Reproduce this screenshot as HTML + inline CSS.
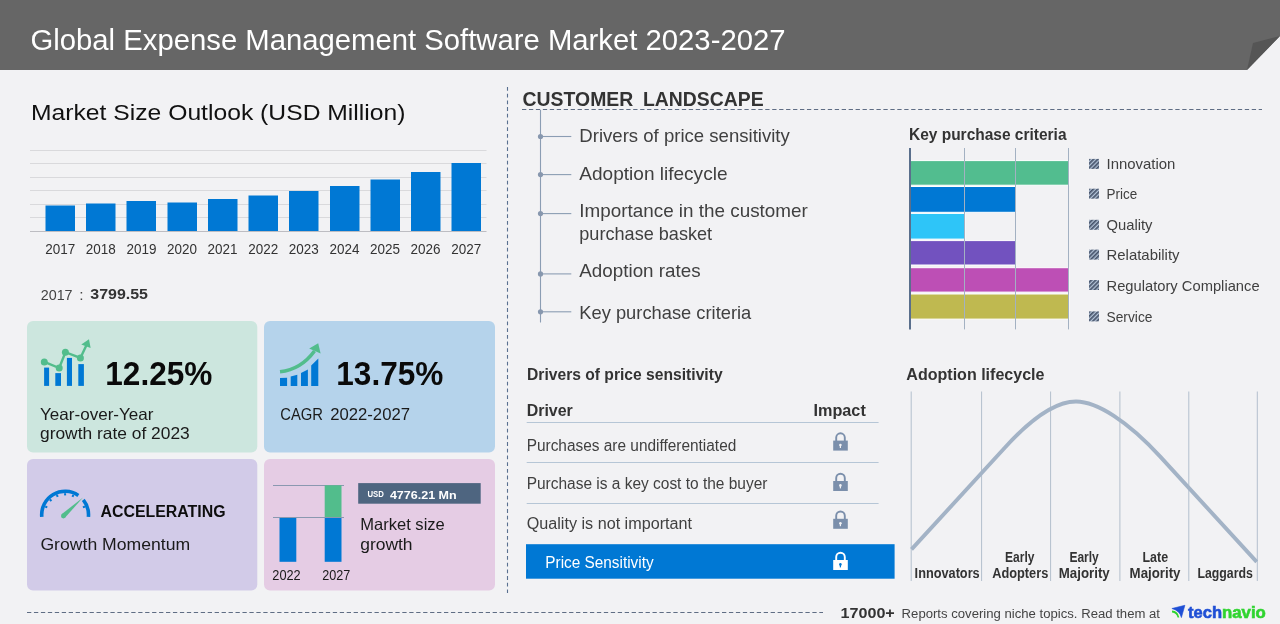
<!DOCTYPE html>
<html><head><meta charset="utf-8">
<style>
html,body{margin:0;padding:0;background:#f2f2f4;}
body{width:1280px;height:624px;overflow:hidden;}
svg{display:block;will-change:transform;}
text{font-family:"Liberation Sans",sans-serif;}
.b{font-weight:bold;}
</style></head>
<body>
<svg width="1280" height="624" viewBox="0 0 1280 624">
<rect x="0" y="0" width="1280" height="624" fill="#f2f2f4"/>
<!-- header -->
<polygon points="0,0 1280,0 1280,36 1247,70 0,70" fill="#666666"/>
<polygon points="1247,70 1253,43 1280,36" fill="#555555"/>
<text x="30.5" y="50" font-size="29" fill="#ffffff" textLength="755" lengthAdjust="spacingAndGlyphs">Global Expense Management Software Market 2023-2027</text>

<!-- Market size outlook -->
<text x="31" y="119.7" font-size="22.5" fill="#111111" textLength="374.5" lengthAdjust="spacingAndGlyphs">Market Size Outlook (USD Million)</text>
<g stroke="#d9d9dc" stroke-width="1">
<line x1="30" y1="150.5" x2="486.5" y2="150.5"/>
<line x1="30" y1="163.5" x2="486.5" y2="163.5"/>
<line x1="30" y1="177.5" x2="486.5" y2="177.5"/>
<line x1="30" y1="190.5" x2="486.5" y2="190.5"/>
<line x1="30" y1="204.5" x2="486.5" y2="204.5"/>
<line x1="30" y1="217.5" x2="486.5" y2="217.5"/>
</g>
<g fill="#0078d4">
<rect x="45.5" y="205.5" width="29.5" height="26"/>
<rect x="86" y="203.5" width="29.5" height="28"/>
<rect x="126.5" y="201" width="29.5" height="30.5"/>
<rect x="167.5" y="202.5" width="29.5" height="29"/>
<rect x="208" y="199" width="29.5" height="32.5"/>
<rect x="248.5" y="195.5" width="29.5" height="36"/>
<rect x="289" y="191" width="29.5" height="40.5"/>
<rect x="330" y="186" width="29.5" height="45.5"/>
<rect x="370.5" y="179.5" width="29.5" height="52"/>
<rect x="411" y="172" width="29.5" height="59.5"/>
<rect x="451.5" y="163" width="29.5" height="68.5"/>
</g>
<line x1="30" y1="231.5" x2="486.5" y2="231.5" stroke="#bdbdc2" stroke-width="1"/>
<g font-size="14.5" fill="#333333" text-anchor="middle">
<text x="60.2" y="254" textLength="30" lengthAdjust="spacingAndGlyphs">2017</text>
<text x="100.8" y="254" textLength="30" lengthAdjust="spacingAndGlyphs">2018</text>
<text x="141.4" y="254" textLength="30" lengthAdjust="spacingAndGlyphs">2019</text>
<text x="182" y="254" textLength="30" lengthAdjust="spacingAndGlyphs">2020</text>
<text x="222.6" y="254" textLength="30" lengthAdjust="spacingAndGlyphs">2021</text>
<text x="263.2" y="254" textLength="30" lengthAdjust="spacingAndGlyphs">2022</text>
<text x="303.8" y="254" textLength="30" lengthAdjust="spacingAndGlyphs">2023</text>
<text x="344.4" y="254" textLength="30" lengthAdjust="spacingAndGlyphs">2024</text>
<text x="385" y="254" textLength="30" lengthAdjust="spacingAndGlyphs">2025</text>
<text x="425.6" y="254" textLength="30" lengthAdjust="spacingAndGlyphs">2026</text>
<text x="466.2" y="254" textLength="30" lengthAdjust="spacingAndGlyphs">2027</text>
</g>
<text x="40.7" y="299.8" font-size="15.5" fill="#444444" textLength="31.9" lengthAdjust="spacingAndGlyphs">2017</text><text x="79.2" y="299.8" font-size="15.5" fill="#444444">:</text>
<text x="90.3" y="299.4" font-size="15" class="b" fill="#333333" textLength="57.7" lengthAdjust="spacingAndGlyphs">3799.55</text>

<!-- cards -->
<rect x="27" y="321" width="230.3" height="131.5" rx="6" fill="#cce6de"/>
<rect x="264" y="321" width="231" height="131.5" rx="6" fill="#b5d3eb"/>
<rect x="27" y="459" width="230.3" height="131.5" rx="6" fill="#d2cbe8"/>
<rect x="264" y="459" width="231" height="131.5" rx="6" fill="#e5cce4"/>

<!-- card1 icon -->
<g fill="#0078d4">
<rect x="44.1" y="367.6" width="5" height="18.3"/>
<rect x="55.3" y="373.1" width="5.7" height="12.8"/>
<rect x="66.9" y="357.9" width="5.1" height="28"/>
<rect x="78.3" y="364.1" width="5.6" height="21.8"/>
</g>
<g fill="#52bd8c" stroke="#52bd8c">
<polyline points="44.3,361.9 59.2,368 65.4,352.2 80.4,357.9 86.3,345.5" fill="none" stroke-width="2.4"/>
<circle cx="44.3" cy="361.9" r="3.5" stroke="none"/>
<circle cx="59.2" cy="368" r="3.5" stroke="none"/>
<circle cx="65.4" cy="352.2" r="3.5" stroke="none"/>
<circle cx="80.4" cy="357.9" r="3.5" stroke="none"/>
<polygon points="89,339.3 81.3,344.6 90.6,348" stroke="none"/>
</g>
<text x="105.3" y="385" font-size="33.8" class="b" fill="#0a0a0a" textLength="107" lengthAdjust="spacingAndGlyphs">12.25%</text>
<text x="40" y="419.8" font-size="16.5" fill="#1a1a1a" textLength="113.5" lengthAdjust="spacingAndGlyphs">Year-over-Year</text>
<text x="40" y="439.2" font-size="16.5" fill="#1a1a1a" textLength="149.8" lengthAdjust="spacingAndGlyphs">growth rate of 2023</text>

<!-- card2 icon -->
<g fill="#0078d4">
<polygon points="280,378 287.1,377.8 287.1,385.9 280,385.9"/>
<polygon points="290.7,376.5 297.3,374.7 297.3,385.9 290.7,385.9"/>
<polygon points="301,373 307.9,369.5 307.9,385.9 301,385.9"/>
<polygon points="311.2,365.5 318.3,358.4 318.3,385.9 311.2,385.9"/>
</g>
<path d="M280,371.8 Q301,369.5 314.5,351" fill="none" stroke="#52bd8c" stroke-width="3.6"/>
<polygon points="318.2,343.3 309.2,348.6 320.6,353.6" fill="#52bd8c"/>
<text x="336.3" y="385" font-size="33.8" class="b" fill="#0a0a0a" textLength="107" lengthAdjust="spacingAndGlyphs">13.75%</text>
<text x="280.2" y="420" font-size="16.5" fill="#1a1a1a" textLength="42.8" lengthAdjust="spacingAndGlyphs">CAGR</text><text x="330.2" y="420" font-size="16.5" fill="#1a1a1a" textLength="79.8" lengthAdjust="spacingAndGlyphs">2022-2027</text>

<!-- card3 gauge -->
<g fill="none" stroke="#0078d4" stroke-width="3.6">
<path d="M41.80,516.90 A23.4,23.4 0 0 1 78.35,495.42"/>
<path d="M83.29,499.97 A23.4,23.4 0 0 1 88.40,516.90"/>
</g>
<g stroke="#0078d4" stroke-width="2"><line x1="84.96" y1="506.47" x2="82.93" y2="507.31"/><line x1="73.33" y1="494.84" x2="72.49" y2="496.87"/><line x1="65.10" y1="493.20" x2="65.10" y2="495.40"/><line x1="56.87" y1="494.84" x2="57.71" y2="496.87"/><line x1="49.90" y1="499.50" x2="51.45" y2="501.05"/><line x1="45.24" y1="506.47" x2="47.27" y2="507.31"/></g>
<polygon points="61.6,514.3 65.2,517.6 83,497.4" fill="#52bd8c"/>
<circle cx="63.4" cy="516" r="2.4" fill="#52bd8c"/>
<text x="100.5" y="516.8" font-size="16" class="b" fill="#0d0d0d" textLength="125" lengthAdjust="spacingAndGlyphs">ACCELERATING</text>
<text x="40.4" y="549.8" font-size="16.5" fill="#1a1a1a" textLength="149.8" lengthAdjust="spacingAndGlyphs">Growth Momentum</text>

<!-- card4 mini chart -->
<line x1="273" y1="485.5" x2="344" y2="485.5" stroke="#8a98b0" stroke-width="1"/>
<rect x="324.7" y="485.3" width="16.8" height="32" fill="#52bd8c"/>
<rect x="279.5" y="517.8" width="16.8" height="44" fill="#0078d4"/>
<rect x="324.7" y="517.8" width="16.8" height="44" fill="#0078d4"/>
<line x1="273" y1="517.5" x2="344" y2="517.5" stroke="#8a98b0" stroke-width="1"/>
<text x="272.3" y="580" font-size="14.8" fill="#1a1a1a" textLength="28.4" lengthAdjust="spacingAndGlyphs">2022</text>
<text x="322.3" y="580" font-size="14.8" fill="#1a1a1a" textLength="28.1" lengthAdjust="spacingAndGlyphs">2027</text>
<rect x="358.2" y="483.1" width="122.5" height="20.6" fill="#4e6580"/>
<text x="367.5" y="496.8" font-size="9.5" class="b" fill="#ffffff" textLength="16.4" lengthAdjust="spacingAndGlyphs">USD</text>
<text x="389.9" y="498.8" font-size="11" class="b" fill="#ffffff" textLength="66.8" lengthAdjust="spacingAndGlyphs">4776.21 Mn</text>
<text x="360.2" y="529.7" font-size="16.5" fill="#1a1a1a" textLength="84.6" lengthAdjust="spacingAndGlyphs">Market size</text>
<text x="360.2" y="549.8" font-size="16.5" fill="#1a1a1a" textLength="52.4" lengthAdjust="spacingAndGlyphs">growth</text>

<!-- divider -->
<line x1="507.5" y1="87" x2="507.5" y2="593" stroke="#5a7090" stroke-width="1.1" stroke-dasharray="3.8,2.9"/>
<line x1="27" y1="612.5" x2="823" y2="612.5" stroke="#5f6d84" stroke-width="1.1" stroke-dasharray="4.3,2.65"/>

<!-- customer landscape -->
<text x="522.6" y="105.6" font-size="19.5" class="b" fill="#333333" textLength="110.7" lengthAdjust="spacingAndGlyphs">CUSTOMER</text><text x="643" y="105.6" font-size="19.5" class="b" fill="#333333" textLength="120.6" lengthAdjust="spacingAndGlyphs">LANDSCAPE</text>
<line x1="522" y1="109.5" x2="1262" y2="109.5" stroke="#5f6d84" stroke-width="1.1" stroke-dasharray="4.3,2.65"/>
<g stroke="#8b9db3" stroke-width="1.1" fill="#8797ae">
<line x1="540.5" y1="110" x2="540.5" y2="322.5"/>
<line x1="540.5" y1="136.5" x2="571.3" y2="136.5"/>
<line x1="540.5" y1="174.6" x2="571.3" y2="174.6"/>
<line x1="540.5" y1="213.6" x2="571.3" y2="213.6"/>
<line x1="540.5" y1="273.9" x2="571.3" y2="273.9"/>
<line x1="540.5" y1="311.8" x2="571.3" y2="311.8"/>
<circle cx="540.5" cy="136.5" r="2.6" stroke="none"/>
<circle cx="540.5" cy="174.6" r="2.6" stroke="none"/>
<circle cx="540.5" cy="213.6" r="2.6" stroke="none"/>
<circle cx="540.5" cy="273.9" r="2.6" stroke="none"/>
<circle cx="540.5" cy="311.8" r="2.6" stroke="none"/>
</g>
<g font-size="19" fill="#404040">
<text x="579.3" y="142.3" textLength="210.5" lengthAdjust="spacingAndGlyphs">Drivers of price sensitivity</text>
<text x="579.3" y="179.5" textLength="148.2" lengthAdjust="spacingAndGlyphs">Adoption lifecycle</text>
<text x="579.3" y="217.2" textLength="228.5" lengthAdjust="spacingAndGlyphs">Importance in the customer</text>
<text x="579.3" y="239.7" textLength="132.8" lengthAdjust="spacingAndGlyphs">purchase basket</text>
<text x="579.3" y="277.4" textLength="121.3" lengthAdjust="spacingAndGlyphs">Adoption rates</text>
<text x="579.3" y="318.5" textLength="172" lengthAdjust="spacingAndGlyphs">Key purchase criteria</text>
</g>

<!-- drivers table -->
<text x="527" y="379.6" font-size="15.9" class="b" fill="#333333" textLength="195.6" lengthAdjust="spacingAndGlyphs">Drivers of price sensitivity</text>
<text x="526.7" y="416" font-size="16.2" class="b" fill="#333333" textLength="46.1" lengthAdjust="spacingAndGlyphs">Driver</text>
<text x="813.5" y="416" font-size="16.2" class="b" fill="#333333" textLength="52.3" lengthAdjust="spacingAndGlyphs">Impact</text>
<g stroke="#b6c6d6" stroke-width="1">
<line x1="526.7" y1="422.5" x2="878.6" y2="422.5"/>
<line x1="526.7" y1="462.5" x2="878.6" y2="462.5"/>
<line x1="526.7" y1="503.5" x2="878.6" y2="503.5"/>
</g>
<g font-size="16" fill="#404040">
<text x="526.7" y="450.9" textLength="209.6" lengthAdjust="spacingAndGlyphs">Purchases are undifferentiated</text>
<text x="526.7" y="488.7" textLength="240.7" lengthAdjust="spacingAndGlyphs">Purchase is a key cost to the buyer</text>
<text x="526.7" y="528.5" textLength="165.3" lengthAdjust="spacingAndGlyphs">Quality is not important</text>
</g>
<rect x="526" y="544.2" width="368.6" height="34.5" fill="#0078d4"/>
<text x="545.3" y="567.9" font-size="16" fill="#ffffff" textLength="108.3" lengthAdjust="spacingAndGlyphs">Price Sensitivity</text>
<defs>
<g id="lock">
<path d="M-4.3,-8.2 L-4.3,-12 A4.3,4.3 0 0 1 4.3,-12 L4.3,-8.2" fill="none" stroke-width="1.9"/>
<rect x="-7.3" y="-9" width="14.6" height="10" stroke="none"/>
</g>
</defs>
<g fill="#7b8fab" stroke="#7b8fab">
<use href="#lock" x="840.5" y="449.6"/>
<use href="#lock" x="840.5" y="490"/>
<use href="#lock" x="840.5" y="527.8"/>
</g>
<g fill="#f2f2f4">
<circle cx="840.4" cy="445" r="1.3"/><rect x="839.8" y="445" width="1.2" height="3"/>
<circle cx="840.4" cy="485.4" r="1.3"/><rect x="839.8" y="485.4" width="1.2" height="3"/>
<circle cx="840.4" cy="523.2" r="1.3"/><rect x="839.8" y="523.2" width="1.2" height="3"/>
</g>
<g fill="#ffffff" stroke="#ffffff"><use href="#lock" x="840.5" y="569"/></g>
<g fill="#0078d4"><circle cx="840.4" cy="564.4" r="1.3"/><rect x="839.8" y="564.4" width="1.2" height="3"/></g>

<!-- key purchase criteria -->
<text x="909" y="139.5" font-size="16" class="b" fill="#333333" textLength="157.5" lengthAdjust="spacingAndGlyphs">Key purchase criteria</text>
<g stroke="#ffffff" stroke-width="1">
<rect x="909.5" y="160.6" width="159.8" height="24.6" fill="#52bd8f"/>
<rect x="909.5" y="186.5" width="106.7" height="25.8" fill="#0078d4"/>
<rect x="909.5" y="213.4" width="55.8" height="25.7" fill="#2ec5f8"/>
<rect x="909.5" y="240.6" width="106.7" height="24.4" fill="#7252bf"/>
<rect x="909.5" y="267.7" width="159.8" height="24.4" fill="#bd4fb5"/>
<rect x="909.5" y="294.0" width="159.8" height="25.1" fill="#bfb950"/>
</g>
<g stroke="#a3b1c2" stroke-width="1">
<line x1="964.5" y1="148" x2="964.5" y2="329.4"/>
<line x1="1015.5" y1="148" x2="1015.5" y2="329.4"/>
<line x1="1068.5" y1="148" x2="1068.5" y2="329.4"/>
</g>
<line x1="910" y1="148" x2="910" y2="329.4" stroke="#5a6f8c" stroke-width="2"/>
<defs>
<pattern id="hatch" patternUnits="userSpaceOnUse" width="3" height="3" patternTransform="rotate(45)">
<rect width="3" height="3" fill="#b4c4d8"/>
<rect width="1.7" height="3" fill="#46536a"/>
</pattern>
</defs>
<g fill="url(#hatch)">
<rect x="1089" y="158.9" width="10" height="10"/>
<rect x="1089" y="188.7" width="10" height="10"/>
<rect x="1089" y="219.8" width="10" height="10"/>
<rect x="1089" y="249.6" width="10" height="10"/>
<rect x="1089" y="280" width="10" height="10"/>
<rect x="1089" y="311.4" width="10" height="10"/>
</g>
<g font-size="15" fill="#404040">
<text x="1106.5" y="169.4" textLength="68.8" lengthAdjust="spacingAndGlyphs">Innovation</text>
<text x="1106.5" y="199.2" textLength="30.7" lengthAdjust="spacingAndGlyphs">Price</text>
<text x="1106.5" y="230.3" textLength="46" lengthAdjust="spacingAndGlyphs">Quality</text>
<text x="1106.5" y="260.1" textLength="73" lengthAdjust="spacingAndGlyphs">Relatability</text>
<text x="1106.5" y="290.5" textLength="153.1" lengthAdjust="spacingAndGlyphs">Regulatory Compliance</text>
<text x="1106.5" y="321.9" textLength="46" lengthAdjust="spacingAndGlyphs">Service</text>
</g>

<!-- adoption lifecycle -->
<text x="906.3" y="380.2" font-size="16" class="b" fill="#333333" textLength="138.2" lengthAdjust="spacingAndGlyphs">Adoption lifecycle</text>
<g stroke="#b3bfcd" stroke-width="1">
<line x1="911.2" y1="391.5" x2="911.2" y2="581"/>
<line x1="981.6" y1="391.5" x2="981.6" y2="581"/>
<line x1="1050.6" y1="391.5" x2="1050.6" y2="581"/>
<line x1="1119.9" y1="391.5" x2="1119.9" y2="581"/>
<line x1="1188.8" y1="391.5" x2="1188.8" y2="581"/>
<line x1="1257.3" y1="391.5" x2="1257.3" y2="581"/>
</g>
<path d="M911.5,549.4 L1005,447.5 C1030,420 1055,401.5 1076,401.5 C1097,401.5 1128,421.5 1160,456.4 L1256.7,561.9" fill="none" stroke="#a3b3c6" stroke-width="3.9"/>
<g font-size="14" class="b" fill="#333333">
<text x="914.6" y="578" textLength="65.1" lengthAdjust="spacingAndGlyphs">Innovators</text>
<text x="1005" y="562.2" textLength="29.4" lengthAdjust="spacingAndGlyphs">Early</text>
<text x="992.2" y="578" textLength="56.1" lengthAdjust="spacingAndGlyphs">Adopters</text>
<text x="1069.4" y="562.2" textLength="29.4" lengthAdjust="spacingAndGlyphs">Early</text>
<text x="1058.8" y="578" textLength="50.9" lengthAdjust="spacingAndGlyphs">Majority</text>
<text x="1142.5" y="562.2" textLength="25.6" lengthAdjust="spacingAndGlyphs">Late</text>
<text x="1129.6" y="578" textLength="50.9" lengthAdjust="spacingAndGlyphs">Majority</text>
<text x="1197.4" y="578" textLength="55.4" lengthAdjust="spacingAndGlyphs">Laggards</text>
</g>

<!-- footer -->
<text x="840.5" y="617.7" font-size="13.8" class="b" fill="#333333" textLength="54.3" lengthAdjust="spacingAndGlyphs">17000+</text>
<text x="901.6" y="617.7" font-size="12.5" fill="#444444" textLength="258.4" lengthAdjust="spacingAndGlyphs">Reports covering niche topics. Read them at</text>
<path d="M1171.9,608.5 L1184.9,605.3 L1181.4,617.6 Q1180,610.8 1171.9,608.5 Z" fill="#1f4fd5" stroke="#1f4fd5" stroke-width="0.6" stroke-linejoin="round"/>
<path d="M1172,610.6 Q1178.2,611 1179.3,617.4 L1177.6,617.6 Q1176.5,613 1172,612.6 Z" fill="#2fd42f"/>
<text x="1188" y="617.5" font-size="17" class="b" fill="#1f4fd5" stroke="#1f4fd5" stroke-width="0.6" textLength="34" lengthAdjust="spacingAndGlyphs">tech</text>
<text x="1222" y="617.5" font-size="17" class="b" fill="#2fd42f" stroke="#2fd42f" stroke-width="0.6" textLength="43.8" lengthAdjust="spacingAndGlyphs">navio</text>
</svg>
</body></html>
